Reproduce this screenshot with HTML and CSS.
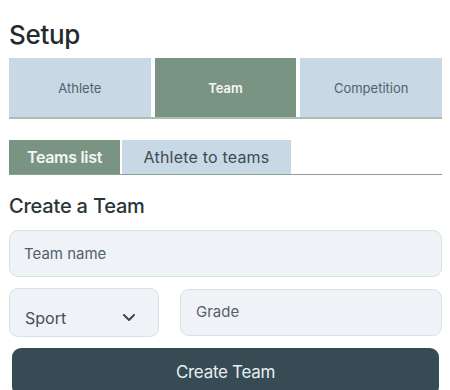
FILE: index.html
```
<!DOCTYPE html>
<html lang="en">
<head>
    <meta charset="UTF-8">
    <meta name="viewport" content="width=device-width, initial-scale=1.0">
    <title>Setup</title>
    <link rel="stylesheet" href="styles.css">
</head>
<body>
    <div class="page">
        <h1>Setup</h1>
        <nav class="main-tabs">
            <button class="main-tab">Athlete</button>
            <button class="main-tab active">Team</button>
            <button class="main-tab">Competition</button>
        </nav>

        <nav class="sub-tabs">
            <button class="sub-tab active">Teams list</button>
            <button class="sub-tab wide">Athlete to teams</button>
        </nav>

        <h2>Create a Team</h2>
        <form class="team-form">
            <input type="text" class="field" placeholder="Team name">
            <div class="form-row">
                <div class="field select-field">
                    <span>Sport</span>
                    <svg width="14" height="9" viewBox="0 0 14 9">
                        <path d="M2 2 L7 7 L12 2" fill="none" stroke="#3d474d" stroke-width="2" stroke-linecap="round" stroke-linejoin="round"/>
                    </svg>
                </div>
                <input type="text" class="field grade" placeholder="Grade">
            </div>
            <button type="submit" class="create-btn">Create Team</button>
        </form>
    </div>
</body>
</html>
```

FILE: styles.css
```
body {
    margin: 0;
    padding: 0;
    background-color: white;
    font-family: Inter, 'Open Sans', sans-serif;
    color: #2b3438;
}

.page {
    padding: 19px 8px 0 9px;
}

h1 {
    font-size: 26px;
    line-height: 32px;
    font-weight: 500;
    margin: 0 0 7px 0;
    color: #232b2f;
    letter-spacing: -0.3px;
}

.main-tabs {
    display: flex;
    gap: 4px;
    border-bottom: 2px solid #aebcb4;
}

button {
    font-family: inherit;
    border: none;
    cursor: pointer;
}

.main-tab {
    flex: 1;
    height: 59px;
    background-color: #c8d8e5;
    color: #55626b;
    font-size: 13px;
}

.main-tab.active {
    background-color: #7a9483;
    color: #f4f7f5;
    font-weight: 600;
}

.sub-tabs {
    display: flex;
    gap: 2px;
    margin-top: 21px;
    border-bottom: 1px solid #90a298;
}

.sub-tab {
    width: 111px;
    height: 34px;
    padding: 0;
    background-color: #c8d8e5;
    color: #3f4b53;
    font-size: 16px;
    letter-spacing: 0.2px;
}

.sub-tab.wide {
    width: 169px;
}

.sub-tab.active {
    background-color: #7a9483;
    color: #f4f7f5;
    font-weight: 600;
    letter-spacing: -0.3px;
}

h2 {
    font-size: 20px;
    line-height: 24px;
    font-weight: 500;
    margin: 19px 0 12px 0;
    color: #2b3438;
    letter-spacing: -0.2px;
}

.team-form {
    display: flex;
    flex-direction: column;
    gap: 11px;
}

.field {
    box-sizing: border-box;
    height: 47px;
    border: 1px solid #d3e4dc;
    border-radius: 9px;
    background-color: #eff3f8;
    padding: 0 14px;
    font-family: inherit;
    font-size: 15px;
    color: #4f5a61;
    outline: none;
}

.field::placeholder {
    color: #555f66;
}

.form-row {
    display: flex;
    align-items: center;
    gap: 21px;
}

.select-field {
    flex-shrink: 0;
    width: 150px;
    height: 49px;
    display: flex;
    align-items: center;
    justify-content: space-between;
    padding: 10px 22px 0 15px;
    font-size: 16px;
    color: #464f55;
}

.grade {
    flex: 1;
    min-width: 0;
    padding-left: 15px;
    padding-bottom: 2px;
}

.create-btn {
    height: 48px;
    margin: 0 3px;
    border-radius: 9px;
    background-color: #364b54;
    color: #e8eef0;
    font-size: 17px;
    letter-spacing: -0.3px;
}
```
